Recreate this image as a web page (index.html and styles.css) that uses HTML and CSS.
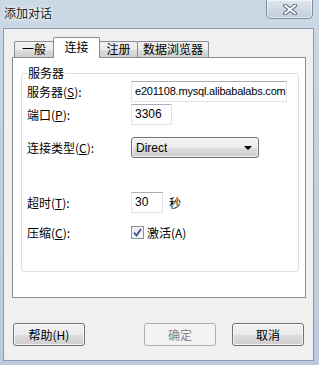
FILE: index.html
```html
<!DOCTYPE html>
<html lang="zh-CN">
<head>
<meta charset="utf-8">
<title>添加对话</title>
<link rel="stylesheet" href="styles.css">
</head>
<body>
<div class="window">
  <div class="titlebar">
    <span class="title">添加对话</span>
    <div class="close">
      <svg width="14" height="11" viewBox="0 0 14 11">
        <path d="M2 1.5 L12 9.5 M12 1.5 L2 9.5" stroke="#5d6c80" stroke-width="4" stroke-linecap="round"/>
        <path d="M2 1.5 L12 9.5 M12 1.5 L2 9.5" stroke="#ffffff" stroke-width="2" stroke-linecap="round"/>
      </svg>
    </div>
  </div>
  <div class="client">
    <div class="tabs">
      <div class="tab t1">一般</div>
      <div class="tab t2 active">连接</div>
      <div class="tab t3">注册</div>
      <div class="tab t4">数据浏览器</div>
    </div>
    <div class="panel">
      <fieldset class="group">
        <legend class="legend">服务器</legend>
        <div class="row r1">
          <span class="label">服务器(<u>S</u>):</span>
          <div class="input wide">e201108.mysql.alibabalabs.com</div>
        </div>
        <div class="row r2">
          <span class="label">端口(<u>P</u>):</span>
          <div class="input port">3306</div>
        </div>
        <div class="row r3">
          <span class="label">连接类型(<u>C</u>):</span>
          <div class="combo"><span class="combo-text">Direct</span><span class="arrow"></span></div>
        </div>
        <div class="row r4">
          <span class="label">超时(<u>T</u>):</span>
          <div class="input timeout">30</div>
          <span class="unit">秒</span>
        </div>
        <div class="row r5">
          <span class="label">压缩(<u>C</u>):</span>
          <span class="check">
            <svg width="9" height="9" viewBox="0 0 9 9"><path d="M1 4.5 L3.5 7.5 L8 1" fill="none" stroke="#3c4f92" stroke-width="1.8"/></svg>
          </span>
          <span class="check-label">激活(A)</span>
        </div>
      </fieldset>
    </div>
    <div class="buttons">
      <div class="btn">帮助(H)</div>
      <div class="spacer"></div>
      <div class="btn disabled">确定</div>
      <div class="btn cancel">取消</div>
    </div>
  </div>
</div>
</body>
</html>
```
FILE: styles.css
```css
* { box-sizing: border-box; }
html, body { margin: 0; padding: 0; }
body {
  width: 319px;
  height: 365px;
  overflow: hidden;
  font-family: "Noto Sans CJK SC", "Liberation Sans", sans-serif;
  font-size: 12px;
  color: #000;
}
.window {
  width: 319px;
  height: 365px;
  display: flex;
  flex-direction: column;
  background: linear-gradient(180deg, #cbd8e5 0%, #c3d1df 40%, #bccbdb 100%);
}
.titlebar {
  height: 28px;
  display: flex;
  align-items: flex-start;
  padding: 0 6px 0 4px;
}
.title {
  margin-top: 5px;
  line-height: 16px;
  font-size: 12px;
  color: #1a1a1a;
  text-shadow: 0 0 6px #ffffff, 0 0 3px #ffffff;
}
.close {
  margin-left: auto;
  width: 47px;
  height: 19px;
  border: 1px solid #7f8c9c;
  border-top: none;
  border-radius: 0 0 5px 5px;
  background: linear-gradient(180deg, #dfe7ef 0%, #cfd9e4 50%, #c2cfdc 100%);
  box-shadow: inset 0 0 0 1px rgba(255,255,255,0.55);
  display: flex;
  align-items: center;
  justify-content: center;
}
.client {
  flex: 1;
  margin: 0 5px 4px 3px;
  border: 1px solid #8d9aab;
  background: #f0f0f0;
  padding: 8px 7px 0 8px;
  display: flex;
  flex-direction: column;
}
.tabs {
  height: 20px;
  display: flex;
  align-items: flex-end;
  padding-left: 2px;
  position: relative;
  z-index: 1;
}
.tab {
  height: 16px;
  border: 1px solid #898c95;
  border-bottom: none;
  border-radius: 2px 2px 0 0;
  background: linear-gradient(180deg, #f2f2f2 0%, #ebebeb 50%, #dddddd 51%, #cfcfcf 100%);
  line-height: 14px;
  text-align: center;
  margin-left: -1px;
}
.t1 { width: 40px; margin-left: 0; }
.t2 { width: 47px; }
.t3 { width: 39px; }
.t4 { width: 72px; }
.tab.active {
  height: 21px;
  margin-bottom: -1px;
  background: #ffffff;
  line-height: 18px;
  position: relative;
  z-index: 2;
}
.panel {
  width: 294px;
  height: 241px;
  border: 1px solid #898c95;
  background: #ffffff;
  padding: 8px 6px 0 8px;
}
.group {
  margin: 0;
  height: 206px;
  border: 1px solid #d5dfe5;
  border-radius: 3px;
  padding: 1px 0 0 5px;
  min-width: 0;
}
.legend {
  padding: 0 1px;
  margin-left: 0;
  line-height: 14px;
  font-size: 12px;
}
.row {
  display: flex;
  align-items: center;
  height: 21px;
}
.r2 { margin-top: 2px; }
.r3 { margin-top: 12px; }
.r4 { margin-top: 34px; }
.r5 { margin-top: 9px; }
.label {
  width: 104px;
  flex: none;
  line-height: 14px;
  white-space: nowrap;
}
.label u { text-underline-offset: 1px; }
.input {
  height: 21px;
  background: #ffffff;
  border: 1px solid #e2e3ea;
  border-top-color: #abadb3;
  line-height: 19px;
  padding-left: 3px;
  font-family: "Liberation Sans", "Noto Sans CJK SC", sans-serif;
  white-space: nowrap;
  overflow: hidden;
}
.wide { width: 156px; font-size: 11px; letter-spacing: -0.2px; padding-left: 3px; }
.port { width: 41px; }
.timeout { width: 32px; }
.unit { margin-left: 6px; line-height: 14px; }
.combo {
  width: 128px;
  height: 21px;
  border: 1px solid #707070;
  border-radius: 3px;
  background: linear-gradient(180deg, #f2f2f2 0%, #ebebeb 50%, #dddddd 51%, #cfcfcf 100%);
  box-shadow: inset 0 0 0 1px rgba(255,255,255,0.7);
  display: flex;
  align-items: center;
  padding: 0 6px 0 4px;
  font-family: "Liberation Sans", "Noto Sans CJK SC", sans-serif;
}
.combo-text { flex: 1; line-height: 14px; }
.arrow {
  width: 0;
  height: 0;
  border-left: 4px solid transparent;
  border-right: 4px solid transparent;
  border-top: 4px solid #000;
}
.check {
  width: 13px;
  height: 13px;
  border: 1px solid #8e8f8f;
  background: linear-gradient(135deg, #e6e6e6 0%, #fbfbfb 100%);
  box-shadow: inset 0 0 0 1px #f4f4f4;
  display: flex;
  align-items: center;
  justify-content: center;
}
.check-label { margin-left: 3px; line-height: 14px; }
.buttons {
  display: flex;
  margin-top: 25px;
  padding: 0 2px 0 1px;
}
.spacer { flex: 1; }
.btn {
  width: 72px;
  height: 23px;
  border: 1px solid #707070;
  border-radius: 3px;
  background: linear-gradient(180deg, #f2f2f2 0%, #ebebeb 50%, #dddddd 51%, #cfcfcf 100%);
  box-shadow: inset 0 0 0 1px rgba(255,255,255,0.75);
  text-align: center;
  line-height: 21px;
}
.btn.disabled {
  border-color: #adb2b5;
  background: #f4f4f4;
  box-shadow: none;
  color: #838383;
}
.cancel { margin-left: 16px; }
```
